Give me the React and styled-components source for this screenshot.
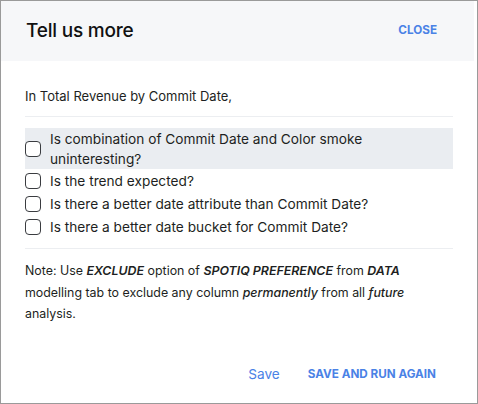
import React from 'react';
import styled, { createGlobalStyle } from 'styled-components';

const GlobalStyle = createGlobalStyle`
  html, body {
    margin: 0;
    padding: 0;
    background: #fff;
  }
  body {
    font-family: Inter, "Noto Sans", sans-serif;
    color: #1d1f22;
  }
`;

const Dialog = styled.div`
  box-sizing: border-box;
  width: 478px;
  height: 404px;
  border: 1px solid #9a9a9a;
  padding-right: 3px;
  background: #fff;
  display: flex;
  flex-direction: column;
`;

const Header = styled.div`
  box-sizing: border-box;
  height: 60px;
  background: #f6f7f9;
  display: flex;
  align-items: center;
  justify-content: space-between;
  padding: 0 37px 2px 25px;
`;

const Title = styled.h2`
  margin: 0;
  font-size: 19px;
  font-weight: 500;
  color: #111;
  letter-spacing: -0.2px;
`;

const LinkButton = styled.button`
  border: 0;
  background: none;
  padding: 0;
  cursor: pointer;
  font-family: Inter, "Noto Sans", sans-serif;
  color: #4a82e6;
  font-size: ${(p) => (p.$caps ? '11.7px' : '13.6px')};
  font-weight: ${(p) => (p.$caps ? 700 : 400)};
  text-transform: ${(p) => (p.$caps ? 'uppercase' : 'none')};
`;

const Body = styled.div`
  flex: 1;
  padding: 24px 21px 0 24px;
  display: flex;
  flex-direction: column;
`;

const Intro = styled.p`
  margin: 0;
  font-size: 13px;
  line-height: 22px;
  padding-bottom: 9px;
  border-bottom: 1px solid #eceef1;
`;

const Options = styled.ul`
  list-style: none;
  margin: 11px 0 0;
  padding: 0 0 10px;
  border-bottom: 1px solid #eceef1;
`;

const Option = styled.li`
  display: flex;
  align-items: center;
  gap: 9px;
  padding: ${(p) => (p.$active ? '1px 40px 0 0' : '1px 0')};
  min-height: 21px;
  background: ${(p) => (p.$active ? '#eaedf1' : 'transparent')};
  font-size: 13.7px;
  line-height: 20px;
`;

const Box = styled.span`
  flex: none;
  box-sizing: border-box;
  width: 16px;
  height: 16px;
  border: 1.5px solid #3a3c40;
  border-radius: 4px;
  background: #fff;
`;

const Note = styled.p`
  margin: 11px 0 0;
  font-size: 12.4px;
  line-height: 21.5px;
  padding-right: 20px;

  b {
    font-weight: 600;
    font-style: italic;
  }
  i {
    font-weight: 500;
  }
`;

const Footer = styled.div`
  display: flex;
  justify-content: flex-end;
  align-items: center;
  gap: 28px;
  padding: 0 38px 14px 0;
  height: 30px;
`;

const questions = [
  'Is combination of Commit Date and Color smoke uninteresting?',
  'Is the trend expected?',
  'Is there a better date attribute than Commit Date?',
  'Is there a better date bucket for Commit Date?',
];

export default function App() {
  return (
    <>
      <GlobalStyle />
      <Dialog>
        <Header>
          <Title>Tell us more</Title>
          <LinkButton $caps>Close</LinkButton>
        </Header>
        <Body>
          <Intro>In Total Revenue by Commit Date,</Intro>
          <Options>
            {questions.map((q, i) => (
              <Option key={q} $active={i === 0}>
                <Box />
                <span>{q}</span>
              </Option>
            ))}
          </Options>
          <Note>
            Note: Use <b>EXCLUDE</b> option of <b>SPOTIQ PREFERENCE</b> from <b>DATA</b>{' '}
            modelling tab to exclude any column <i>permanently</i> from all <i>future</i>{' '}
            analysis.
          </Note>
        </Body>
        <Footer>
          <LinkButton>Save</LinkButton>
          <LinkButton $caps>Save and run again</LinkButton>
        </Footer>
      </Dialog>
    </>
  );
}
